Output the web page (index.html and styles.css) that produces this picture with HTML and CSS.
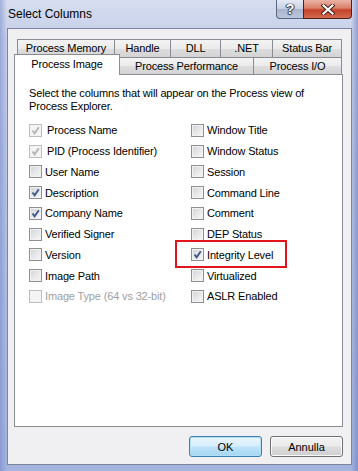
FILE: index.html
```html
<!DOCTYPE html>
<html lang="en">
<head>
  <meta charset="UTF-8">
  <title>Select Columns</title>
  <link rel="stylesheet" href="styles.css">
</head>
<body>
  <div class="window">
    <div class="titlebar">
      <span class="title">Select Columns</span>
      <div class="caption">
        <span class="cap-btn help">?</span>
        <span class="cap-btn close">
          <svg width="14" height="11" viewBox="0 0 14 11">
            <path d="M2.5 1.5 L11.5 9.5 M11.5 1.5 L2.5 9.5" stroke="#3b1a14" stroke-width="4" stroke-linecap="square"/>
            <path d="M2.5 1.5 L11.5 9.5 M11.5 1.5 L2.5 9.5" stroke="#fff" stroke-width="2.2" stroke-linecap="square"/>
          </svg>
        </span>
      </div>
    </div>

    <div class="client">
      <div class="tabrow back">
        <span class="tab first" style="width:98px">Process Memory</span>
        <span class="tab" style="width:56px">Handle</span>
        <span class="tab" style="width:50px">DLL</span>
        <span class="tab" style="width:52px">.NET</span>
        <span class="tab" style="width:69px">Status Bar</span>
      </div>
      <div class="tabrow front">
        <span class="tab first active" style="width:106px">Process Image</span>
        <span class="tab" style="width:134px">Process Performance</span>
        <span class="tab" style="width:88px">Process I/O</span>
      </div>

      <div class="panel">
        <p class="intro">Select the columns that will appear on the Process view of<br>Process Explorer.</p>

        <div class="options">
          <div class="opt locked"><span class="box checked off"><svg viewBox="0 0 11 11"><path d="M2.5 5.5 L4.6 8.3 L8.8 2.2"/></svg></span>Process Name</div>
          <div class="opt locked"><span class="box checked off"><svg viewBox="0 0 11 11"><path d="M2.5 5.5 L4.6 8.3 L8.8 2.2"/></svg></span>PID (Process Identifier)</div>
          <div class="opt"><span class="box"></span>User Name</div>
          <div class="opt"><span class="box checked"><svg viewBox="0 0 11 11"><path d="M2.5 5.5 L4.6 8.3 L8.8 2.2"/></svg></span>Description</div>
          <div class="opt"><span class="box checked"><svg viewBox="0 0 11 11"><path d="M2.5 5.5 L4.6 8.3 L8.8 2.2"/></svg></span>Company Name</div>
          <div class="opt"><span class="box"></span>Verified Signer</div>
          <div class="opt"><span class="box"></span>Version</div>
          <div class="opt"><span class="box"></span>Image Path</div>
          <div class="opt disabled"><span class="box off"></span>Image Type (64 vs 32-bit)</div>

          <div class="opt"><span class="box"></span>Window Title</div>
          <div class="opt"><span class="box"></span>Window Status</div>
          <div class="opt"><span class="box"></span>Session</div>
          <div class="opt"><span class="box"></span>Command Line</div>
          <div class="opt"><span class="box"></span>Comment</div>
          <div class="opt"><span class="box"></span>DEP Status</div>
          <div class="opt"><span class="box checked"><svg viewBox="0 0 11 11"><path d="M2.5 5.5 L4.6 8.3 L8.8 2.2"/></svg></span>Integrity Level</div>
          <div class="opt"><span class="box"></span>Virtualized</div>
          <div class="opt"><span class="box"></span>ASLR Enabled</div>
        </div>

        <div class="highlight"></div>
      </div>

      <div class="buttons">
        <button class="btn default">OK</button>
        <button class="btn">Annulla</button>
      </div>
    </div>
  </div>
</body>
</html>
```

FILE: styles.css
```css
* {
  box-sizing: border-box;
}
body {
  margin: 0;
  font-family: "Liberation Sans", Arial, sans-serif;
  font-size: 11px;
  letter-spacing: -0.15px;
  color: #000;
}
.window {
  width: 358px;
  height: 471px;
  padding: 0 6px 6px 7px;
  display: flex;
  flex-direction: column;
  background:
    linear-gradient(90deg, rgba(110,130,200,0.5) 0px, rgba(120,140,200,0) 7px, rgba(120,140,200,0) 351px, rgba(100,115,185,0.55) 358px),
    linear-gradient(180deg, #d6ddef 0%, #c5cfe9 8%, #b7c3e3 40%, #a5b3df 100%);
}
.titlebar {
  height: 28px;
  display: flex;
  align-items: flex-start;
}
.title {
  font-size: 12px;
  letter-spacing: 0;
  line-height: 28px;
  padding-left: 1px;
  flex: 1;
}
.caption {
  display: flex;
  height: 19px;
}
.cap-btn {
  height: 19px;
  display: flex;
  align-items: center;
  justify-content: center;
  border: 1px solid #5c6881;
  border-top: none;
}
.help {
  width: 27px;
  border-radius: 0 0 0 4px;
  border-right: none;
  background: linear-gradient(180deg, #e4e9f3 0%, #c9d2e4 48%, #aab6cf 52%, #b9c5dc 100%);
  color: #fff;
  font-weight: bold;
  font-size: 14px;
  text-shadow: 0 0 1px #2a3550, 1px 0 1px #2a3550, -1px 0 1px #2a3550, 0 1px 1px #2a3550;
}
.close {
  width: 49px;
  border-radius: 0 0 4px 0;
  border-color: #50211a;
  background: linear-gradient(180deg, #eab3a6 0%, #d9806b 45%, #c4412a 55%, #d36a4f 100%);
}
.client {
  flex: 1;
  border: 1px solid #7c859b;
  background: #f0f0f3;
  padding: 10px 8px 0 6px;
}
.tabrow {
  display: flex;
}
.tabrow.back {
  margin-left: 3px;
  height: 18px;
}
.tabrow.front {
  height: 17px;
}
.tab {
  display: block;
  height: 100%;
  padding-top: 2px;
  line-height: 13px;
  text-align: center;
  white-space: nowrap;
  border: 1px solid #898c95;
  border-bottom: none;
  border-left: none;
  background: linear-gradient(180deg, #f3f3f3 0%, #ebebeb 50%, #dedede 52%, #d3d3d3 100%);
}
.tab.first {
  border-left: 1px solid #898c95;
}
.tab.active {
  position: relative;
  z-index: 2;
  height: 21px;
  margin-top: -3px;
  padding-top: 3px;
  background: #fff;
}
.panel {
  position: relative;
  width: 329px;
  height: 353px;
  background: #fff;
  border: 1px solid #898c95;
  padding: 12px 0 0 14px;
}
.intro {
  margin: 0;
  line-height: 13px;
}
.options {
  margin-top: 7px;
  display: grid;
  grid-template-columns: 162px 1fr;
  grid-template-rows: repeat(9, 20.75px);
  grid-auto-flow: column;
}
.opt {
  display: flex;
  align-items: center;
  white-space: nowrap;
}
.opt.locked .box {
  margin-right: 5px;
}
.opt.disabled {
  color: #a0a0a0;
}
.box {
  width: 13px;
  height: 13px;
  margin-right: 3px;
  border: 1px solid #8e8f8f;
  box-shadow: inset 0 0 0 1px #f2f2f2;
  background: linear-gradient(135deg, #cfd1d3 0%, #e6e7e8 50%, #f7f7f7 100%);
  display: flex;
  align-items: center;
  justify-content: center;
}
.box svg {
  width: 11px;
  height: 11px;
}
.box svg path {
  fill: none;
  stroke: #3f5a8f;
  stroke-width: 1.9;
}
.box.off {
  border-color: #bdbdbd;
  background: #f4f4f4;
  box-shadow: none;
}
.box.off svg path {
  stroke: #b4b4b4;
}
.highlight {
  position: absolute;
  left: 160px;
  top: 165px;
  width: 112px;
  height: 28px;
  border: 2px solid #e3151c;
}
.buttons {
  display: flex;
  justify-content: flex-end;
  gap: 8px;
  margin-top: 9px;
}
.btn {
  width: 73px;
  height: 21px;
  padding: 0;
  font-family: "Liberation Sans", Arial, sans-serif;
  font-size: 11px;
  color: #000;
  border: 1px solid #707070;
  border-radius: 3px;
  background: linear-gradient(180deg, #f2f2f2 0%, #ebebeb 48%, #dddddd 52%, #cfcfcf 100%);
  box-shadow: inset 0 0 0 1px #fbfbfb;
}
.btn.default {
  border-color: #3c7fb1;
  background: linear-gradient(180deg, #e9f5fc 0%, #d7eefb 48%, #bce3f9 52%, #a5d6f2 100%);
  box-shadow: inset 0 0 0 1px #b4dff7;
}
```
